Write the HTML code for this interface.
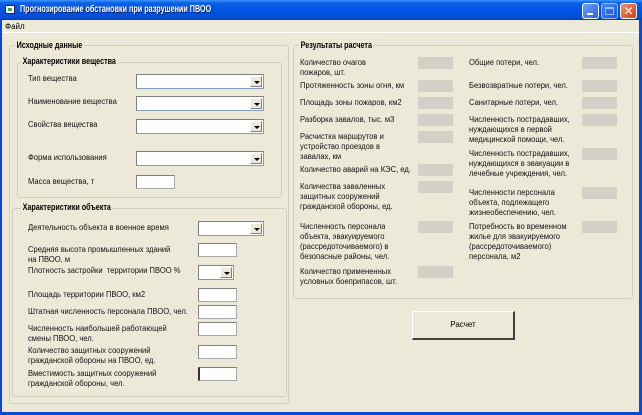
<!DOCTYPE html>
<html><head><meta charset="utf-8"><style>
*{margin:0;padding:0;box-sizing:border-box}
body{width:642px;height:415px;overflow:hidden;background:#ECE9D8;font-family:"Liberation Sans","DejaVu Sans",sans-serif;font-size:9px;color:#000;position:relative}
.a{position:absolute}
#tb{left:0;top:0;width:642px;height:20px;background:linear-gradient(#3D95FF 0%,#0A5FE6 15%,#0055E5 50%,#0050D8 85%,#003DB0 100%)}
#tt{left:20px;top:4px;color:#fff;font-weight:bold;font-size:10px;text-shadow:1px 1px #0a1e6a;transform:scaleX(0.72);transform-origin:0 0;white-space:nowrap}
.wb{top:3px;width:17px;height:16px;border:1px solid #fff;border-radius:3px;background:linear-gradient(135deg,#6FA0FF,#2A64E0)}
#fr{left:0;top:20px;width:642px;height:395px;border-left:2px solid #0B4AD0;border-right:3px solid #0B4AD0;border-bottom:3px solid #0B4AD0}
fieldset{position:absolute;border:1px solid #D0D0BF;border-radius:3px}
.gl{position:absolute;background:#ECE9D8;font-weight:bold;font-size:9px;padding:0 2px;line-height:11px;transform:scaleX(0.8);transform-origin:0 0;white-space:nowrap}
.l{position:absolute;line-height:10px;font-size:8px;color:#111;white-space:nowrap;transform:scaleX(0.95);transform-origin:0 0}
.cb{position:absolute;height:15px;background:#fff;border:1px solid #7F9DB9;border-top-color:#808080;border-left-color:#808080}
.cb i{position:absolute;right:1px;top:1px;width:12px;height:11px;background:#ECE9D8;border:1px solid #fff;border-right-color:#808080;border-bottom-color:#808080}
.cb i:after{content:"";position:absolute;left:3px;top:4px;border-left:3px solid transparent;border-right:3px solid transparent;border-top:3px solid #000}
.tx{position:absolute;height:14px;background:#fff;border:1px solid #aaa;border-top-color:#808080;border-left-color:#808080}
.g{position:absolute;width:35px;height:12px;background:#D4D0C8}
</style></head><body>
<div id="tb" class="a"></div>
<div class="a" style="left:5px;top:5px;width:10px;height:9px;background:#fff;border:1px solid #224;"><div style="margin:2px;height:3px;background:#3a6"></div></div>
<div id="tt" class="a">Прогнозирование обстановки при разрушении ПВОО</div>
<div class="a wb" style="left:582px"><div style="margin:9px 0 0 4px;width:6px;height:2px;background:#fff"></div></div>
<div class="a wb" style="left:601px;opacity:.6"><div style="margin:3px 0 0 3px;width:9px;height:8px;border:1px solid #fff;border-top-width:2px"></div></div>
<div class="a wb" style="left:620px;background:linear-gradient(135deg,#F09070,#D0401A);color:#fff;font-weight:bold;font-size:12px;text-align:center;line-height:14px">✕</div>
<div id="fr" class="a"></div>
<div class="a" style="left:5px;top:22px;font-size:8px">Файл</div>
<div class="a" style="left:2px;top:32px;width:637px;height:1px;background:#fff"></div>

<fieldset style="left:9px;top:45px;width:280px;height:359px"></fieldset>
<div class="gl" style="left:15px;top:40px">Исходные данные</div>
<fieldset style="left:17px;top:62px;width:265px;height:136px"></fieldset>
<div class="gl" style="left:21px;top:56px">Характеристики вещества</div>
<div class="l" style="left:28px;top:74px">Тип вещества</div>
<div class="l" style="left:28px;top:97px">Наименование вещества</div>
<div class="l" style="left:28px;top:120px">Свойства вещества</div>
<div class="l" style="left:28px;top:153px">Форма использования</div>
<div class="l" style="left:28px;top:177px">Масса вещества, т</div>
<div class="cb" style="left:136px;top:74px;width:128px"><i></i></div>
<div class="cb" style="left:136px;top:96px;width:128px"><i></i></div>
<div class="cb" style="left:136px;top:119px;width:128px"><i></i></div>
<div class="cb" style="left:136px;top:151px;width:128px"><i></i></div>
<div class="tx" style="left:136px;top:175px;width:39px"></div>

<fieldset style="left:12px;top:208px;width:275px;height:189px"></fieldset>
<div class="gl" style="left:21px;top:202px">Характеристики объекта</div>
<div class="l" style="left:28px;top:223px">Деятельность объекта в военное время</div>
<div class="l" style="left:28px;top:245px">Средняя высота промышленных зданий<br>на ПВОО, м</div>
<div class="l" style="left:28px;top:266px">Плотность застройки&nbsp; территории ПВОО %</div>
<div class="l" style="left:28px;top:290px">Площадь территории ПВОО, км2</div>
<div class="l" style="left:28px;top:307px">Штатная численность персонала ПВОО, чел.</div>
<div class="l" style="left:28px;top:324px">Численность наибольшей работающей<br>смены ПВОО, чел.</div>
<div class="l" style="left:28px;top:346px">Количество защитных сооружений<br>гражданской обороны на ПВОО, ед.</div>
<div class="l" style="left:28px;top:369px">Вместимость защитных сооружений<br>гражданской обороны, чел.</div>
<div class="cb" style="left:198px;top:221px;width:66px"><i></i></div>
<div class="tx" style="left:198px;top:243px;width:39px"></div>
<div class="cb" style="left:198px;top:265px;width:36px"><i></i></div>
<div class="tx" style="left:198px;top:288px;width:39px"></div>
<div class="tx" style="left:198px;top:305px;width:39px"></div>
<div class="tx" style="left:198px;top:322px;width:39px"></div>
<div class="tx" style="left:198px;top:345px;width:39px"></div>
<div class="tx" style="left:198px;top:367px;width:39px;border-left:2px solid #333"></div>

<fieldset style="left:293px;top:45px;width:340px;height:254px"></fieldset>
<div class="gl" style="left:299px;top:40px">Результаты расчета</div>
<div class="l" style="left:300px;top:58px">Количество очагов<br>пожаров, шт.</div>
<div class="l" style="left:300px;top:81px">Протяженность зоны огня, км</div>
<div class="l" style="left:300px;top:98px">Площадь зоны пожаров, км2</div>
<div class="l" style="left:300px;top:115px">Разборка завалов, тыс. м3</div>
<div class="l" style="left:300px;top:132px">Расчистка маршрутов и<br>устройство проездов в<br>завалах, км</div>
<div class="l" style="left:300px;top:165px">Количество аварий на КЭС, ед.</div>
<div class="l" style="left:300px;top:182px">Количества заваленных<br>защитных сооружений<br>гражданской обороны, ед.</div>
<div class="l" style="left:300px;top:222px">Численность персонала<br>объекта, эвакуируемого<br>(рассредоточиваемого) в<br>безопасные районы, чел.</div>
<div class="l" style="left:300px;top:267px">Количество примененных<br>условных боеприпасов, шт.</div>
<div class="g" style="left:418px;top:57px"></div>
<div class="g" style="left:418px;top:80px"></div>
<div class="g" style="left:418px;top:97px"></div>
<div class="g" style="left:418px;top:114px"></div>
<div class="g" style="left:418px;top:131px"></div>
<div class="g" style="left:418px;top:164px"></div>
<div class="g" style="left:418px;top:181px"></div>
<div class="g" style="left:418px;top:221px"></div>
<div class="g" style="left:418px;top:266px"></div>
<div class="l" style="left:469px;top:58px">Общие потери, чел.</div>
<div class="l" style="left:469px;top:81px">Безвозвратные потери, чел.</div>
<div class="l" style="left:469px;top:98px">Санитарные потери, чел.</div>
<div class="l" style="left:469px;top:115px">Численность пострадавших,<br>нуждающихся в первой<br>медицинской помощи, чел.</div>
<div class="l" style="left:469px;top:149px">Численность пострадавших,<br>нуждающихся в эвакуации в<br>лечебные учреждения, чел.</div>
<div class="l" style="left:469px;top:188px">Численности персонала<br>объекта, подлежащего<br>жизнеобеспечению, чел.</div>
<div class="l" style="left:469px;top:222px">Потребность во временном<br>жилье для эвакуируемого<br>(рассредоточиваемого)<br>персонала, м2</div>
<div class="g" style="left:582px;top:57px"></div>
<div class="g" style="left:582px;top:80px"></div>
<div class="g" style="left:582px;top:97px"></div>
<div class="g" style="left:582px;top:114px"></div>
<div class="g" style="left:582px;top:148px"></div>
<div class="g" style="left:582px;top:187px"></div>
<div class="g" style="left:582px;top:221px"></div>

<div class="a" style="left:412px;top:311px;width:103px;height:29px;background:#ECE9D8;border:1px solid #fff;border-right:2px solid #404040;border-bottom:2px solid #404040;text-align:center;line-height:26px;font-size:8px">Расчет</div>
</body></html>
